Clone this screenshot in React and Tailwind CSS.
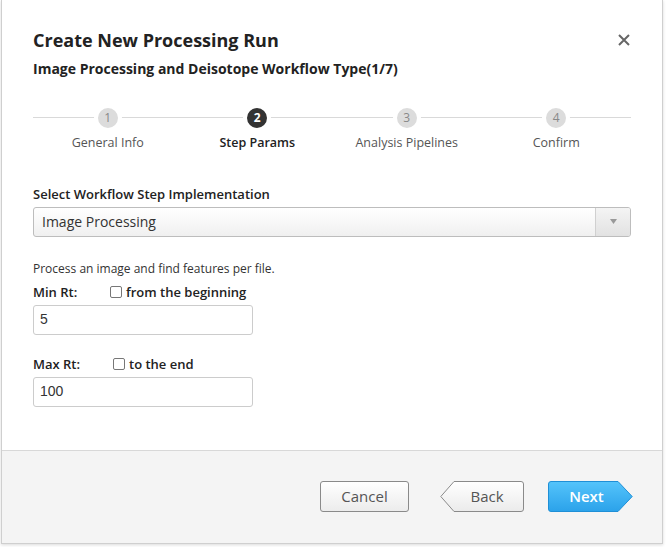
import React from "react";

const OS = { fontFamily: '"Open Sans", "Noto Sans", sans-serif' };

function Step({ n, label, active }) {
  return (
    <div className="flex flex-col items-center w-[150px]">
      <div className="relative w-full h-[24px] flex items-center justify-center">
        <div className="absolute left-0 right-0 top-[11px] h-px bg-[#d9d9d9]" />
        <div
          className={
            "relative z-10 w-[28px] h-[28px] rounded-full border-[4px] border-white flex items-center justify-center text-[12px] " +
            (active ? "bg-[#333333] text-white font-bold" : "bg-[#dcdcdc] text-[#888]")
          }
        >
          {n}
        </div>
      </div>
      <div
        className={
          "mt-[4px] text-[12.5px] " + (active ? "font-semibold text-[#222]" : "text-[#555]")
        }
      >
        {label}
      </div>
    </div>
  );
}

export default function App() {
  return (
    <div className="w-[667px] h-[547px] bg-white" style={OS}>
      <div className="ml-[1px] w-[662px] h-[544px] border-l border-r border-b border-[#cfcfcf] shadow-[0_1px_3px_rgba(0,0,0,0.15)] flex flex-col bg-white">
        <div className="flex-1 px-[31px]">
          <div className="flex items-center justify-between pt-[27px]">
            <h1 className="text-[18px] font-bold text-[#222] leading-[26px]">Create New Processing Run</h1>
            <svg width="12" height="12" viewBox="0 0 12 12" className="mr-[1px]">
              <path d="M1 1 L11 11 M11 1 L1 11" stroke="#666" strokeWidth="2" />
            </svg>
          </div>
          <div className="mt-[6px] text-[14px] font-bold text-[#222] leading-[20px]">
            Image Processing and Deisotope Workflow Type(1/7)
          </div>

          <div className="mt-[27px] flex">
            <Step n="1" label="General Info" />
            <Step n="2" label="Step Params" active />
            <Step n="3" label="Analysis Pipelines" />
            <Step n="4" label="Confirm" />
          </div>

          <div className="mt-[32px] text-[13px] font-semibold text-[#222] leading-[18px]">
            Select Workflow Step Implementation
          </div>
          <div className="mt-[4px] h-[30px] flex border border-[#bdbdbd] rounded-[3px] bg-gradient-to-b from-white to-[#f0f0f0] overflow-hidden">
            <div className="flex-1 flex items-center pl-[8px] text-[14px] text-[#333]">Image Processing</div>
            <div className="w-[35px] border-l border-[#d0d0d0] bg-gradient-to-b from-[#f4f4f4] to-[#e2e2e2] flex items-center justify-center">
              <svg width="7" height="5" viewBox="0 0 7 5">
                <path d="M0 0 L7 0 L3.5 5 Z" fill="#999" />
              </svg>
            </div>
          </div>

          <div className="mt-[24px] text-[12px] text-[#333] leading-[16px]">
            Process an image and find features per file.
          </div>
          <div className="mt-[6px] flex items-center text-[13px] font-semibold text-[#222] leading-[18px]">
            <span className="w-[77px]">Min Rt:</span>
            <span className="w-[12px] h-[12px] border border-[#777] rounded-[2px] bg-white mr-[4px]" />
            <span>from the beginning</span>
          </div>
          <div
            className="mt-[4px] w-[220px] h-[30px] border border-[#cccccc] rounded-[3px] flex items-center pl-[6px] text-[14px] text-[#333]"
            style={{ fontFamily: '"Liberation Sans", Arial, sans-serif' }}
          >
            5
          </div>
          <div className="mt-[20px] flex items-center text-[13px] font-semibold text-[#222] leading-[18px]">
            <span className="w-[80px]">Max Rt:</span>
            <span className="w-[12px] h-[12px] border border-[#777] rounded-[2px] bg-white mr-[4px]" />
            <span>to the end</span>
          </div>
          <div
            className="mt-[4px] w-[220px] h-[30px] border border-[#cccccc] rounded-[3px] flex items-center pl-[6px] text-[14px] text-[#333]"
            style={{ fontFamily: '"Liberation Sans", Arial, sans-serif' }}
          >
            100
          </div>
        </div>

        <div className="h-[93px] border-t border-[#d8d8d8] bg-[#f4f4f4] flex items-start justify-end pr-[29px] pt-[30px] gap-[31px]">
          <button className="w-[89px] h-[31px] rounded-[3px] border border-[#8a8a8a] bg-gradient-to-b from-white to-[#ececec] text-[15px] text-[#555]">
            Cancel
          </button>
          <button className="relative w-[84px] h-[31px] text-[15px] text-[#555]">
            <svg className="absolute inset-0" width="84" height="31" viewBox="0 0 84 31">
              <defs>
                <linearGradient id="bg" x1="0" y1="0" x2="0" y2="1">
                  <stop offset="0" stopColor="#ffffff" />
                  <stop offset="1" stopColor="#ebebeb" />
                </linearGradient>
              </defs>
              <path d="M0.8 15.5 L14 0.5 L81 0.5 Q83.5 0.5 83.5 3 L83.5 28 Q83.5 30.5 81 30.5 L14 30.5 Z" fill="url(#bg)" stroke="#8a8a8a" />
            </svg>
            <span className="relative pl-[10px]">Back</span>
          </button>
          <button className="relative w-[85px] h-[31px] text-[15px] font-semibold text-white -ml-[7px]">
            <svg className="absolute inset-0" width="85" height="31" viewBox="0 0 85 31">
              <defs>
                <linearGradient id="bn" x1="0" y1="0" x2="0" y2="1">
                  <stop offset="0" stopColor="#55c4fb" />
                  <stop offset="1" stopColor="#2ba2ea" />
                </linearGradient>
              </defs>
              <path d="M3 0.5 L70 0.5 L84.2 15.5 L70 30.5 L3 30.5 Q0.5 30.5 0.5 28 L0.5 3 Q0.5 0.5 3 0.5 Z" fill="url(#bn)" stroke="#1f8fd6" />
            </svg>
            <span className="relative pr-[8px]">Next</span>
          </button>
        </div>
      </div>
    </div>
  );
}
